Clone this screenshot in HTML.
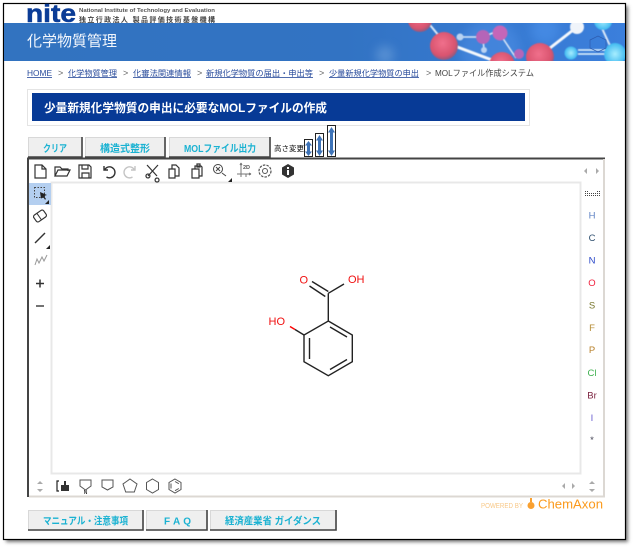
<!DOCTYPE html>
<html><head><meta charset="utf-8"><style>
html,body{margin:0;padding:0;background:#fff;width:635px;height:549px;overflow:hidden}
svg{display:block}
text{font-family:"Liberation Sans","Noto Sans CJK JP",sans-serif}
.i{fill:none;stroke:#333;stroke-width:1.2}
.g{fill:none;stroke:#555;stroke-width:1}
.b{font-size:10px;font-weight:bold;fill:#1ab2d2}
.c{font-size:8.2px;fill:#2a4c9c;text-decoration:underline}
.s{font-size:9px;fill:#666}
.e{font-size:9.5px;text-anchor:middle}
.t{fill:none;stroke:#d8d8d8}
</style></head><body>
<svg width="635" height="549" viewBox="0 0 635 549" xmlns="http://www.w3.org/2000/svg">
<defs>
<filter id="sh" x="-5%" y="-5%" width="110%" height="110%"><feGaussianBlur stdDeviation="1.800"/></filter>
<filter id="bl" x="-10%" y="-10%" width="120%" height="120%"><feGaussianBlur stdDeviation=".6"/></filter>
<filter id="bl2" x="-50%" y="-50%" width="200%" height="200%"><feGaussianBlur stdDeviation="5"/></filter>
<linearGradient id="bn" x1="0" x2="1" y1="0" y2="0"><stop offset="0" stop-color="#3273c0"/><stop offset=".55" stop-color="#3273c3"/><stop offset="1" stop-color="#3b7fdc"/></linearGradient>
<radialGradient id="rd" cx=".45" cy=".4" r=".6"><stop offset="0" stop-color="#f0708c"/><stop offset=".75" stop-color="#d9546f"/><stop offset="1" stop-color="#8f5a80"/></radialGradient>
<radialGradient id="cy" cx=".5" cy=".5" r=".55"><stop offset="0" stop-color="#a8eeff"/><stop offset="1" stop-color="#35b4ee"/></radialGradient>
<clipPath id="bc"><rect x="4" y="23" width="621" height="38"/></clipPath>
</defs>
<rect x="6" y="6" width="622" height="536" fill="#777" filter="url(#sh)"/>
<rect x="3.500" y="3.500" width="622" height="536" fill="#fff" stroke="#000" stroke-width="1.200"/>

<!-- logo -->
<text x="26" y="22" font-size="25" font-weight="bold" fill="#0b3c96" textLength="50" lengthAdjust="spacingAndGlyphs" stroke="#0b3c96" stroke-width=".5">nite</text>
<text x="79" y="12" font-size="5.600" font-weight="bold" fill="#555" textLength="136" lengthAdjust="spacingAndGlyphs">National Institute of Technology and Evaluation</text>
<text x="79" y="22" font-size="7" font-weight="bold" fill="#444" textLength="136">独立行政法人 製品評価技術基盤機構</text>

<!-- banner -->
<rect x="4" y="23" width="621" height="38" fill="url(#bn)"/>
<g clip-path="url(#bc)">
<circle cx="490" cy="50" r="30" fill="#5a9af0" opacity=".35" filter="url(#bl2)"/>
<circle cx="385" cy="55" r="9" fill="#7aaae0" opacity=".5" filter="url(#bl2)"/>
<circle cx="545" cy="30" r="14" fill="#4a8fe8" opacity=".7" filter="url(#bl2)"/>
<g filter="url(#bl)">
<g stroke="#dbe8f8" fill="none">
<path d="M430 25 444 42" stroke-width="2"/>
<path d="M444 42 500 63" stroke-width="3" stroke="#f4f8fc"/>
<path d="M458 37H482" stroke-width="1.500"/>
<path d="M483 37 500 30" stroke-width="1.500"/>
<path d="M500 34 516 58" stroke-width="1.500"/>
<path d="M483 38 484 50" stroke-width="1.500"/>
<path d="M550 48 577 27" stroke-width="3" stroke="#f4f8fc"/>
<path d="M578 50H618 M578 54H618" stroke-width="1.500" stroke="#e8f8ff"/>
<path d="M600 24 612 50" stroke-width="2"/>
</g>
<circle cx="444" cy="46" r="14" fill="url(#rd)"/>
<circle cx="420" cy="20" r="12" fill="url(#rd)"/>
<circle cx="460" cy="37" r="3.500" fill="#b9d3f2"/>
<circle cx="483" cy="37" r="7" fill="#b565b8"/>
<circle cx="500" cy="33" r="7.500" fill="#c566b8"/>
<circle cx="484" cy="50" r="3" fill="#b9d3f2"/>
<circle cx="502" cy="65" r="13" fill="url(#rd)"/>
<circle cx="519" cy="54" r="5" fill="#b565b8"/>
<circle cx="540" cy="57" r="14" fill="url(#rd)"/>
<circle cx="577" cy="27" r="7" fill="#f0f4fa"/>
<circle cx="571" cy="53" r="6.500" fill="url(#cy)"/>
<circle cx="615" cy="54" r="11" fill="url(#cy)"/>
<circle cx="603" cy="21" r="9" fill="url(#cy)"/>
</g>
<path d="M590 40l8-4 8 4v8l-8 4-8-4z" fill="none" stroke="#2e5cae" stroke-width=".7"/>
</g>
<text x="27" y="46" font-size="15" fill="#f2f6fc" textLength="90" lengthAdjust="spacingAndGlyphs">化学物質管理</text>

<!-- breadcrumb -->
<text x="27" y="76" class="c" textLength="25" lengthAdjust="spacingAndGlyphs">HOME</text>
<text x="58" y="76" class="s">&gt;</text>
<text x="68" y="76" class="c" textLength="49" lengthAdjust="spacingAndGlyphs">化学物質管理</text>
<text x="123" y="76" class="s">&gt;</text>
<text x="133" y="76" class="c" textLength="58" lengthAdjust="spacingAndGlyphs">化審法関連情報</text>
<text x="197" y="76" class="s">&gt;</text>
<text x="206" y="76" class="c" textLength="107" lengthAdjust="spacingAndGlyphs">新規化学物質の届出・申出等</text>
<text x="319" y="76" class="s">&gt;</text>
<text x="329" y="76" class="c" textLength="90" lengthAdjust="spacingAndGlyphs">少量新規化学物質の申出</text>
<text x="426" y="76" class="s">&gt;</text>
<text x="435" y="76" font-size="8.500" fill="#444" textLength="99" lengthAdjust="spacingAndGlyphs">MOLファイル作成システム</text>

<!-- title -->
<rect x="27.500" y="89.500" width="502" height="36" fill="#fff" stroke="#e4e4e4"/>
<rect x="32" y="93" width="493" height="28" fill="#073a96"/>
<text x="44" y="112" font-size="12" font-weight="bold" fill="#fff" textLength="283" lengthAdjust="spacingAndGlyphs">少量新規化学物質の申出に必要なMOLファイルの作成</text>

<!-- top buttons -->
<g>
<path d="M28 137H83V157H28Z" fill="#efefef"/><path d="M28.500 157V137.500H82" class="t"/><path d="M82 137V157H28" fill="none" stroke="#444" stroke-width="1.600"/>
<path d="M85 137H166V157H85Z" fill="#efefef"/><path d="M85.500 157V137.500H165" class="t"/><path d="M165 137V157H85" fill="none" stroke="#444" stroke-width="1.600"/>
<path d="M169 137H271V157H169Z" fill="#efefef"/><path d="M169.500 157V137.500H270" class="t"/><path d="M270 137V157H169" fill="none" stroke="#444" stroke-width="1.600"/>
<text x="43" y="152" class="b" textLength="24" lengthAdjust="spacingAndGlyphs">クリア</text>
<text x="100" y="152" class="b" textLength="50" lengthAdjust="spacingAndGlyphs">構造式整形</text>
<text x="184" y="152" class="b" textLength="72" lengthAdjust="spacingAndGlyphs">MOLファイル出力</text>
</g>
<text x="274" y="151" font-size="7.500" fill="#111" textLength="30" lengthAdjust="spacingAndGlyphs">高さ変更</text>
<g fill="#3f74b8">
<rect x="304.500" y="139.500" width="8" height="17" fill="#fff" stroke="#222"/>
<path d="M308.500 141l3.500 4.500h-2v6h2l-3.500 4.500-3.500-4.500h2v-6h-2z"/>
<rect x="315.500" y="133.500" width="8" height="23" fill="#fff" stroke="#222"/>
<path d="M319.500 135l3.500 5.500h-2v10h2l-3.500 5.500-3.500-5.500h2v-10h-2z"/>
<rect x="327.500" y="125.500" width="8" height="31" fill="#fff" stroke="#222"/>
<path d="M331.500 127l3.500 5.500h-2v18h2l-3.500 5.500-3.500-5.500h2v-18h-2z"/>
</g>

<!-- marvin frame -->
<rect x="28" y="159" width="576" height="338" fill="#fff"/>
<path d="M28 497V158.500H605" fill="none" stroke="#444" stroke-width="2"/>
<path d="M604 159V496.500H29" fill="none" stroke="#dcd8d3" stroke-width="2"/>
<rect x="51.500" y="182.500" width="529" height="291" fill="#fff" stroke="#e8e8e8" stroke-width="2"/>
<rect x="29" y="183" width="22" height="22" fill="#b4cff0"/>

<!-- top toolbar icons -->
<g class="i">
<path d="M35 165h7l4 4v9H35z M42 165v4h4"/>
<path d="M55 176v-9h5l2 2h6v2 M55 176l3-6h12l-3 6z"/>
<path d="M79 165h10l2 2v11H79z M82 165v4h6v-4 M82 178v-5h7v5"/>
<path d="M104 166v4h4 M104.500 170a5.500 5.500 0 1 1 2 7" stroke-width="1.400"/>
<path d="M135 166v4h-4 M134.500 170a5.500 5.500 0 1 0-2 7" stroke="#c4c4c4" stroke-width="1.400"/>
<path d="M147 165l10 11 M158 165l-10 11 M148 178a2 2 0 1 0-.1 0 M157 178a2 2 0 1 0 .1 0"/>
<path d="M169 169h6v9h-6z M172 169v-4h4l3 3v8h-4"/>
<path d="M192 169h7v9h-7z M195 169v-3h6l1 1v9h-3 M197 164h3v3h-3z"/>
</g>
<g fill="none" stroke="#444" stroke-width="1">
<circle cx="218" cy="169" r="4.500"/><path d="M216 167l4 4 M220 167l-4 4 M222 173l4 3"/>
</g>
<path d="M232 182v-4l-4 4z" fill="#222"/>
<g fill="none" stroke="#777" stroke-width="1"><path d="M241 163v14 M237 174h14 M241 163l-1 2 M241 163l1 2 M251 174l-2-1 M251 174l-2 1"/><path d="M246 177v-3"/></g>
<text x="243" y="169" font-size="5.500" font-weight="bold" fill="#555">2D</text>
<circle cx="265" cy="171" r="2.500" class="g"/><circle cx="265" cy="171" r="6" fill="none" stroke="#555" stroke-width="1.200" stroke-dasharray="2.500 1.200"/>
<path d="M288 164l6 3.500v7L288 178l-6-3.500v-7z" fill="#333"/><rect x="287" y="170" width="2" height="5" fill="#fff"/><rect x="287" y="167" width="2" height="2" fill="#fff"/>
<path d="M587 168v6l-3-3zM596 168v6l3-3z" fill="#aaa"/>

<!-- left toolbar -->
<g>
<rect x="34.500" y="187.500" width="10" height="10" fill="none" stroke="#444" stroke-dasharray="1.500 1.500"/>
<path d="M40 192l7 3-3 1 2 3-1 .8-2-3-2 2z" fill="#222"/>
<path d="M49 204v-4l-4 4z" fill="#222"/>
<g transform="rotate(-35 40 216)"><rect x="34" y="212" width="12" height="8" rx="2" fill="none" stroke="#333" stroke-width="1.200"/><path d="M39 212v8" stroke="#333"/></g>
<path d="M35 243l10-10" stroke="#333" stroke-width="1.400"/>
<path d="M50 249v-4l-4 4z" fill="#222"/>
<path d="M35 265l2-6 2 4 3-6 2 4 3-6" fill="none" stroke="#999"/>
<path d="M36 283.500h8 M40 279.500v8" stroke="#333" stroke-width="1.500"/>
<path d="M36 306h8" stroke="#444" stroke-width="1.500"/>
</g>

<!-- molecule -->
<g fill="none" stroke="#222" stroke-width="1.400">
<path d="M328.300 321L352.300 335V361.700L328.300 375.700L304 361.700V335Z"/>
<path d="M330 327L347 337 M347 359.500L330 369.500 M309.500 359V338"/>
<path d="M328.300 321V293.300"/>
<path d="M328.300 293.300L344 284"/>
<path d="M328.300 291.500L312 281.500 M325.300 296.500L309.500 286"/>
<path d="M304 335L295 329.500"/>
</g>
<g fill="none" stroke="#f00" stroke-width="1.400">
<path d="M295 329.500L290 326.500"/>
</g>
<g font-size="11" fill="#f01010">
<text x="299.500" y="283.500">O</text>
<text x="348" y="283">OH</text>
<text x="268.500" y="325">HO</text>
</g>

<!-- right toolbar -->
<path d="M585.500 196v-6M587.500 196v-6M589.500 196v-4M591.500 196v-3M593.500 196v-3M595.500 196v-4M597.500 196v-6M599.500 196v-6" stroke="#444" stroke-dasharray="1 1" fill="none"/>
<text x="592" y="218.500" class="e" fill="#5f83c4">H</text>
<text x="592" y="241" class="e" fill="#2f4f6f">C</text>
<text x="592" y="263.500" class="e" fill="#2b48c8">N</text>
<text x="592" y="286" class="e" fill="#f0203c">O</text>
<text x="592" y="308.500" class="e" fill="#77752a">S</text>
<text x="592" y="331" class="e" fill="#b58c36">F</text>
<text x="592" y="353" class="e" fill="#b8802a">P</text>
<text x="592" y="376" class="e" fill="#3fb050">Cl</text>
<text x="592" y="398.500" class="e" fill="#7c2340">Br</text>
<text x="592" y="421" class="e" fill="#6b5fd0">I</text>
<text x="592" y="443" class="e" fill="#445">*</text>

<!-- bottom toolbar -->
<path d="M40 481l3 3h-6zM40 492l3-3h-6z" fill="#aaa"/>
<path d="M59 481h-2v10h2" fill="none" stroke="#222" stroke-width="1.200"/>
<rect x="61" y="485" width="8" height="6" fill="#333"/><rect x="64" y="481" width="2" height="5" fill="#333"/>
<g class="g" stroke-width="1.100">
<path d="M80 480h11v6l-5.500 4-5.500-4z"/>
<path d="M102 480h11v7l-5.500 3-5.500-3z"/>
<path d="M130 479l7 5-2.700 8h-8.600l-2.700-8z"/>
<path d="M152.500 479l6 3.500v7l-6 3.500-6-3.500v-7z"/>
<path d="M175 479l6 3.500v7l-6 3.500-6-3.500v-7z M171 483.500v5 M175 481.500l3.800 2.200 M178.800 488.500L175 490.700"/>
</g>
<text x="85.500" y="494" font-size="5" font-weight="bold" text-anchor="middle" fill="#333">N</text>
<path d="M565 483v6l-3-3zM572 483v6l3-3z" fill="#aaa"/>
<path d="M592 481l3 3h-6zM592 492l3-3h-6z" fill="#aaa"/>

<!-- powered by -->
<text x="481" y="508" font-size="7.500" fill="#f8c888" textLength="42" lengthAdjust="spacingAndGlyphs">POWERED BY</text>
<circle cx="531" cy="505.500" r="3.500" fill="#f9a030"/><path d="M531 498v4" stroke="#f9a030" stroke-width="2"/>
<text x="538" y="508.500" font-size="13" fill="#fb9a1c" textLength="65" lengthAdjust="spacingAndGlyphs">ChemAxon</text>

<!-- bottom buttons -->
<path d="M28 510H144V531H28Z" fill="#efefef"/><path d="M28.500 530V510.500H143" class="t"/><path d="M143 510V530H28" fill="none" stroke="#444" stroke-width="1.600"/>
<path d="M146 510H208V531H146Z" fill="#efefef"/><path d="M146.500 530V510.500H207" class="t"/><path d="M207 510V530H146" fill="none" stroke="#444" stroke-width="1.600"/>
<path d="M210 510H337V531H210Z" fill="#efefef"/><path d="M210.500 530V510.500H336" class="t"/><path d="M336 510V530H210" fill="none" stroke="#444" stroke-width="1.600"/>
<text x="43" y="524.500" class="b" textLength="85" lengthAdjust="spacingAndGlyphs">マニュアル・注意事項</text>
<text x="164" y="524.500" class="b" textLength="27">F A Q</text>
<text x="225" y="524.500" class="b" textLength="96" lengthAdjust="spacingAndGlyphs">経済産業省 ガイダンス</text>
</svg>
</body></html>
